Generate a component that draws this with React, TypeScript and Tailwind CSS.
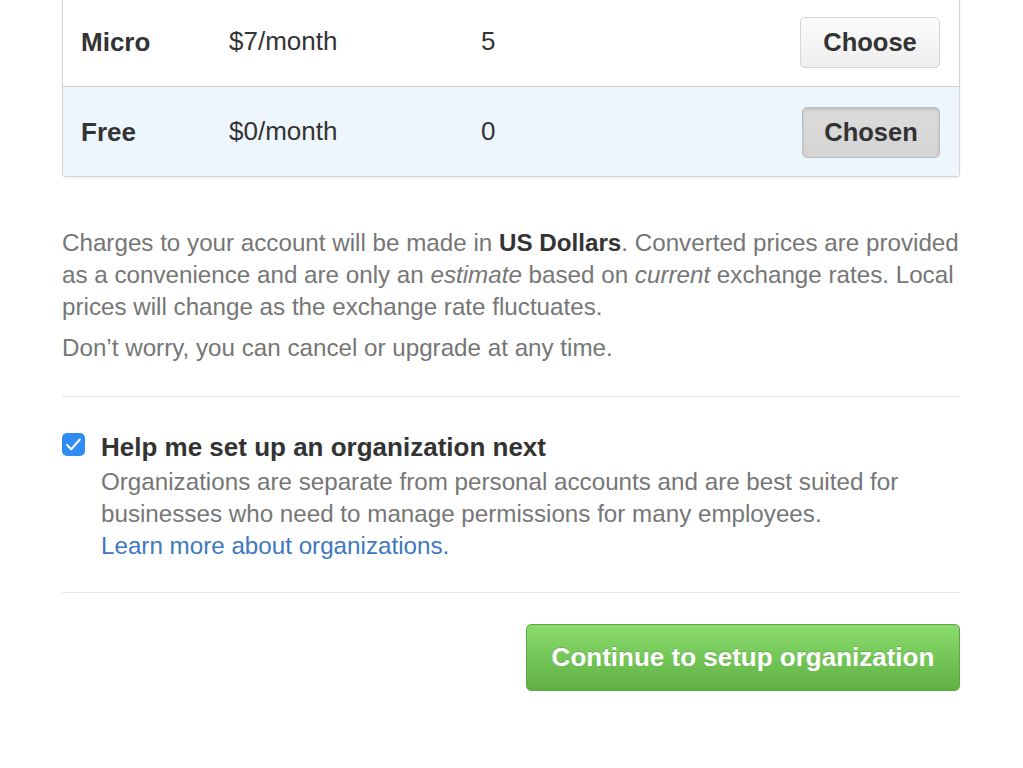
import React from 'react';

interface Plan {
  name: string;
  price: string;
  repos: number;
  chosen?: boolean;
}

const plans: Plan[] = [
  { name: 'Micro', price: '$7/month', repos: 5 },
  { name: 'Free', price: '$0/month', repos: 0, chosen: true },
];

const CheckIcon: React.FC = () => (
  <svg viewBox="0 0 16 16" className="w-[19px] h-[19px]" fill="none" stroke="white" strokeWidth="1.7" strokeLinecap="round" strokeLinejoin="round">
    <path d="M2.6 8.4l3.5 3.6 7.2-8.2" />
  </svg>
);

export default function App() {
  return (
    <div className="min-h-[768px] bg-white font-['Liberation_Sans',Arial,sans-serif] text-[#333]">
      <div className="mx-[62px] w-[898px]">
        {/* plan table, top edge scrolled off */}
        <div className="-mt-[4px] rounded-b-[4px] border border-t-0 border-[#d5d5d5] shadow-[0_1px_2px_rgba(0,0,0,0.08)]">
          {plans.map((plan, i) => (
            <div
              key={plan.name}
              className={`flex h-[90px] items-center pl-[18px] pr-[19px] ${i > 0 ? 'border-t border-[#d0d0d0]' : ''} ${plan.chosen ? 'bg-[#eef6fd]' : 'bg-white'}`}
            >
              <div className="w-[148px] pt-[2px] text-[26px] font-bold text-[#333]">{plan.name}</div>
              <div className="w-[252px] text-[26px] text-[#333]">{plan.price}</div>
              <div className="flex-1 text-[26px] text-[#333]">{plan.repos}</div>
              {plan.chosen ? (
                <button className="mt-[2px] h-[51px] w-[138px] rounded-[5px] border border-[#bdbdbd] bg-gradient-to-b from-[#dcdcdc] to-[#d4d4d4] text-[25.5px] font-bold text-[#333] shadow-[inset_0_2px_3px_rgba(0,0,0,0.12)]">
                  Chosen
                </button>
              ) : (
                <button className="mt-[2px] h-[51px] w-[140px] rounded-[5px] border border-[#d5d5d5] bg-gradient-to-b from-[#fcfcfc] to-[#eeeeee] text-[25.5px] font-bold text-[#333]">
                  Choose
                </button>
              )}
            </div>
          ))}
        </div>

        <div className="pt-[50px] text-[24.2px] leading-[32px] text-[#767676] whitespace-nowrap">
          <p>
            Charges to your account will be made in <strong className="text-[#333]">US Dollars</strong>. Converted prices are provided
            <br />
            as a convenience and are only an <em>estimate</em> based on <em>current</em> exchange rates. Local
            <br />
            prices will change as the exchange rate fluctuates.
          </p>
          <p className="mt-[9px]">Don’t worry, you can cancel or upgrade at any time.</p>
        </div>

        <div className="mt-[32px] border-t border-[#e5e5e5]" />

        <div className="flex gap-[16px] pt-[34px] pb-[30px]">
          <div className="mt-[2px] flex h-[23px] w-[23px] shrink-0 items-center justify-center rounded-[5px] bg-[#2f8cf3]">
            <CheckIcon />
          </div>
          <div>
            <div className="text-[26px] font-bold leading-[32px] text-[#333]">Help me set up an organization next</div>
            <p className="mt-[3px] text-[24.2px] leading-[32px] text-[#767676] whitespace-nowrap">
              Organizations are separate from personal accounts and are best suited for
              <br />
              businesses who need to manage permissions for many employees.
              <br />
              <a className="text-[#4078c0]">Learn more about organizations.</a>
            </p>
          </div>
        </div>

        <div className="border-t border-[#e5e5e5]" />

        <div className="flex justify-end pt-[31px]">
          <button className="h-[67px] w-[434px] rounded-[5px] border border-[#5ca941] bg-gradient-to-b from-[#8add6d] to-[#60b044] text-[26px] font-bold text-white [text-shadow:0_-1px_0_rgba(0,0,0,0.15)]">
            Continue to setup organization
          </button>
        </div>
      </div>
    </div>
  );
}
